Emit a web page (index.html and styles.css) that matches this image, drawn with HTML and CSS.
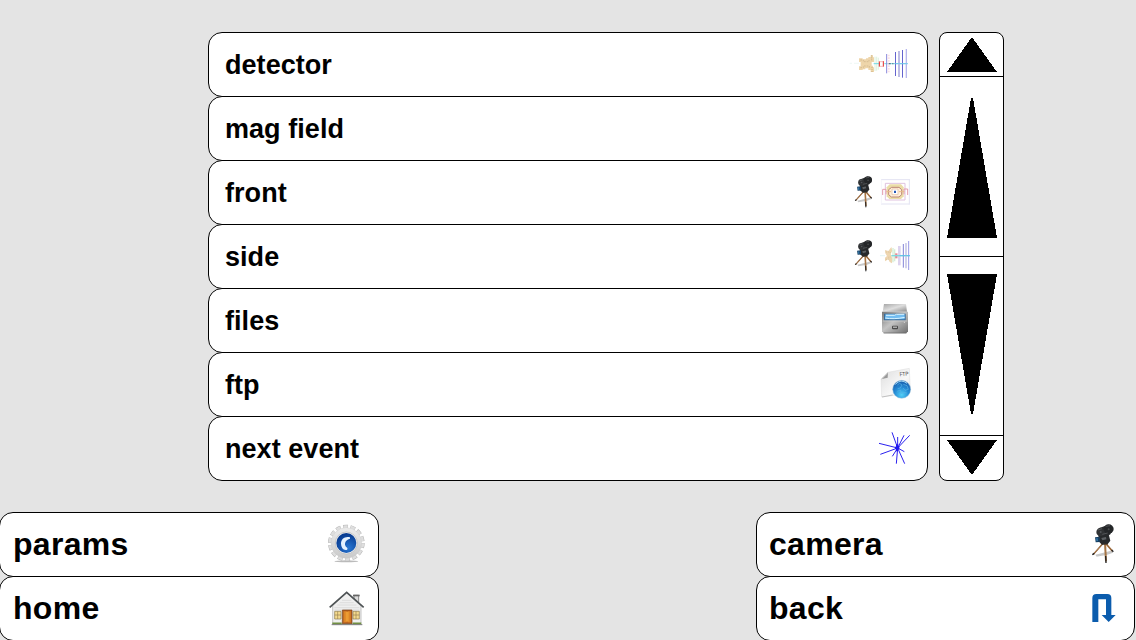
FILE: index.html
```html
<!DOCTYPE html>
<html lang="en">
<head>
<meta charset="utf-8">
<title>Event display menu</title>
<link rel="stylesheet" href="styles.css">
</head>
<body>
<svg class="defs" width="0" height="0" aria-hidden="true">
  <defs>
    <radialGradient id="blue" cx=".5" cy=".8" r=".8"><stop offset="0" stop-color="#53d0f7"/><stop offset=".5" stop-color="#258bd5"/><stop offset="1" stop-color="#1658a8"/></radialGradient>
    <radialGradient id="lens" cx=".6" cy=".75" r=".7"><stop offset="0" stop-color="#2a78d3"/><stop offset="1" stop-color="#073b91"/></radialGradient>
    <linearGradient id="metal" x1="0" y1="0" x2="1" y2="1"><stop offset="0" stop-color="#777"/><stop offset=".45" stop-color="#c4c4c4"/><stop offset="1" stop-color="#6c6c6c"/></linearGradient>
    <linearGradient id="lid" x1="0" y1="0" x2="1" y2="1"><stop offset="0" stop-color="#a5a5a5"/><stop offset=".5" stop-color="#dedede"/><stop offset="1" stop-color="#8c8c8c"/></linearGradient>
    <linearGradient id="gear" x1="0" y1="0" x2="0" y2="1"><stop offset="0" stop-color="#ececec"/><stop offset="1" stop-color="#c9c9c9"/></linearGradient>
    <linearGradient id="paper" x1="0" y1="0" x2="1" y2="1"><stop offset="0" stop-color="#ddd"/><stop offset=".6" stop-color="#f8f8f8"/><stop offset="1" stop-color="#ddd"/></linearGradient>
    <symbol id="movie-camera" viewBox="36 42 66 118">
      <path d="M46 134 76 127 98 121 99 128 80 135 65 137 50 140Z" fill="#c9c9c9"/>
      <path d="M70 99 40 133" stroke="#70421f" stroke-width="4"/>
      <path d="M69 100 41 132" stroke="#d59b5d" stroke-width="2"/>
      <path d="M76 99 97 123" stroke="#9a6434" stroke-width="5"/>
      <path d="M75 98 78 154" stroke="#a77544" stroke-width="6"/>
      <path d="M77 138 78 159M37 134 43 130M95 120 100 125" stroke="#222" stroke-width="4"/>
      <path d="M55 74 85 68 91 92 84 101 66 104 57 95Z" fill="#27292b"/>
      <path d="M64 84 78 81 79 88 67 91Z" fill="#5c6063"/>
      <path d="M45 82 59 80 60 96 47 97Z" fill="#173e60"/>
      <path d="M48 85 53 84 54 93 49 94Z" fill="#3274a5"/>
      <path d="M58 54 85 44 99 58 90 74 62 79Z" fill="#292b2d"/>
      <ellipse cx="62" cy="66" rx="13" ry="13" fill="#303234"/>
      <ellipse cx="86" cy="57" rx="15" ry="14" fill="#242628"/>
      <path d="M54 60 66 56M77 49 90 47M67 73 83 69" stroke="#676a6d" stroke-width="2"/>
      <circle cx="62" cy="66" r="3" fill="#53575a"/><circle cx="86" cy="58" r="3" fill="#4b4e50"/>
      <path d="M67 101H84" stroke="#2f2c29" stroke-width="5"/>
    </symbol>
  </defs>
</svg>

<div class="screen">
  <main class="center">
    <nav class="menu">
      <div class="item"><span class="label">detector</span>
        <svg class="icon row-icon" viewBox="0 9 246 189">
          <path d="M14 100H21M27 100H42" stroke="#e5f4ee" stroke-width="2"/>
          <path d="M42 85H53V88H63V85H70V81H77V76H84V82H87V96H80V107H84V112H87V126H77V120H70V115H61V118H53V120H42V109H47V96H42Z" fill="#eed5aa"/>
          <path d="M46 90H55V95H72V90M46 113H55V108H73V113" fill="none" stroke="#d7bd93" stroke-width="3" stroke-dasharray="5 3"/>
          <path d="M80 76V92M81 111V127" stroke="#c9b284" stroke-width="3" stroke-dasharray="3"/>
          <path d="M90 80V123M95 80V122M100 83V119" stroke="#cdeccf" stroke-width="2"/>
          <path d="M86 101H104M118 101H188" stroke="#73d8e5" stroke-width="3"/>
          <path d="M103 94V110M115 93V110" stroke="#e32626" stroke-width="3"/><path d="M103 95H116M103 109H116" stroke="#ef9898" stroke-width="2"/>
          <path d="M125 72V130" stroke="#8989dc" stroke-width="3"/><path d="M131 74V127" stroke="#fbe0e5" stroke-width="6" stroke-dasharray="5 3"/>
          <path d="M131 101H137M142 101H145" stroke="#596c83" stroke-width="4"/>
          <path d="M151.500 66V138M172.500 60V143" stroke="#6464ce" stroke-width="3"/><path d="M162 63V141" stroke="#bebee6" stroke-width="6"/><path d="M184 57V144" stroke="#b7b7ed" stroke-width="4"/>
          <path d="M151 101H188" stroke="#79c9ed" stroke-width="3"/>
        </svg>
      </div>
      <div class="item"><span class="label">mag field</span></div>
      <div class="item"><span class="label">front</span>
        <svg class="icon row-icon" viewBox="0 -27 246 189">
          <use href="#movie-camera" x="29" y="18" width="53" height="95"/>
          <path d="M108 29H193M108 102H193M193 27V104" stroke="#e3e3f2" stroke-width="3"/><path d="M109 29V101" stroke="#f5f5fb" stroke-width="3"/>
          <path d="M121 40H180V90H121Z" fill="none" stroke="#dfc2df" stroke-width="3"/>
          <path d="M134 43H168L176 52V79L168 87H133L125 79V52Z" fill="#eadca6"/>
          <path d="M140 52H162L170 59V74L162 81H139L131 74V59Z" fill="#fff0d9" stroke="#bc8578" stroke-width="3"/>
          <path d="M141 57H159V74H141Z" fill="#fff" stroke="#e3b798" stroke-width="2"/>
          <path d="M113 58H123V73M113 58V75M188 57H177V73M188 57V75" fill="none" stroke="#e39cac" stroke-width="3"/>
          <path d="M124 65H138M162 65H178" stroke="#e7ba89" stroke-width="3"/>
          <path d="M147 62H153V69H147Z" fill="#2458b8"/>
        </svg>
      </div>
      <div class="item"><span class="label">side</span>
        <svg class="icon row-icon" viewBox="0 -27 246 189">
          <use href="#movie-camera" x="29" y="18" width="53" height="95"/>
          <path d="M105 65H120" stroke="#d4f0ee" stroke-width="2"/>
          <path d="M120 48 130 51 139 39 142 50 137 59 142 74 141 88 134 84 130 76 120 82 120 71 126 66 121 58Z" fill="#eed6b0"/>
          <path d="M122 54H136V60M122 76H131V69H138" fill="none" stroke="#d9bf94" stroke-width="2" stroke-dasharray="4 3"/>
          <path d="M144 42V85M149 46V82" stroke="#d6eed6" stroke-width="4"/>
          <path d="M154 58V73" stroke="#e88995" stroke-width="7"/><path d="M163 36V94" stroke="#ddd3ee" stroke-width="8"/>
          <path d="M139 65H194" stroke="#83d8df" stroke-width="4"/>
          <path d="M175 30V101" stroke="#8282d7" stroke-width="3"/><path d="M183 27V103" stroke="#c9c9e8" stroke-width="5"/><path d="M191 21V108" stroke="#9a9ae5" stroke-width="3"/>
          <path d="M164 65H195" stroke="#60c4e8" stroke-width="3"/>
        </svg>
      </div>
      <div class="item"><span class="label">files</span>
        <svg class="icon file-icon" viewBox="0 -18 171 189">
          <path d="M42 27H108L111 50H38Z" fill="url(#lid)"/>
          <path d="M36 50H114V109L109 115H41L36 109Z" fill="url(#metal)"/>
          <path d="M42 56H107V76H42Z" fill="#386b99"/><path d="M46 58H104V73H45Z" fill="#73bdf1"/>
          <path d="M48 61H74L79 58H103M46 69Q70 74 104 67" fill="none" stroke="#d9f4ff" stroke-width="3"/>
          <path d="M38 78H112" stroke="#d2d2d2" stroke-width="2"/>
          <rect x="66" y="92" width="18" height="11" rx="3" fill="#4a4a4a"/><path d="M69 95H81V98H69Z" fill="#ddd"/>
          <circle cx="103" cy="82" r="1.5" fill="#eee"/><path d="M41 114H109" stroke="#666" stroke-width="2"/>
        </svg>
      </div>
      <div class="item"><span class="label">ftp</span>
        <svg class="icon file-icon" viewBox="0 -21 171 189">
          <path d="M54 37 118 25 121 94 80 105 35 111 33 57Z" fill="url(#paper)" stroke="#ddd" stroke-width="1.5"/>
          <path d="M36 57 54 37 53 53Z" fill="#999"/><path d="M35 57 53 40" stroke="#bbb" stroke-width="3"/>
          <path d="M36 111 68 105" stroke="#aaa" stroke-width="2"/>
          <text class="ftp-mark" x="89" y="49" textLength="27" lengthAdjust="spacingAndGlyphs" transform="rotate(-5 89 49)">FTP</text>
          <circle cx="95" cy="88" r="27" fill="url(#blue)" stroke="#a5c9df" stroke-width="1.5"/>
          <path d="M82 75 89 70 96 75 91 84 83 86M100 73 111 77 115 88 105 91 99 84M82 94 91 90 94 101 101 97 110 99" fill="none" stroke="#57b2e6" stroke-width="2"/>
          <path d="M76 73Q93 55 111 70" fill="none" stroke="#a4d7f3" stroke-width="3"/>
        </svg>
      </div>
      <div class="item"><span class="label">next event</span>
        <svg class="icon file-icon" viewBox="0 -24 171 189">
          <path d="M83 69 66 22M83 69V36M83 69 102 31M83 69 119 31M83 69 27 55M83 69 31 88M83 69 67 94M83 69 79 116M83 69 104 116M83 69 103 80" fill="none" stroke="#2a20ef" stroke-width="3"/>
          <path d="M78 58H85V63H88V73H84V79H78V72H75V65H78Z" fill="#2018ee"/>
        </svg>
      </div>
    </nav>
    <div class="scroll">
      <svg class="arrow step" viewBox="0 0 63 43"><path d="M32 4 57 39H7Z"/></svg>
      <svg class="arrow page" viewBox="0 0 63 179"><path d="M31 21H33L57 161H7Z"/></svg>
      <svg class="arrow page-down" viewBox="0 0 63 178"><path d="M7 17H57L33 157H31Z"/></svg>
      <svg class="arrow step-down" viewBox="0 0 63 44"><path d="M7 4H57L32 39Z"/></svg>
    </div>
  </main>

  <footer class="corners">
    <nav class="menu side-menu">
      <div class="item"><span class="label">params</span>
        <svg class="icon params-icon" viewBox="0 9 174 189">
          <ellipse cx="79" cy="154" rx="36" ry="3" fill="#bbb"/>
          <circle cx="79" cy="99" r="49" fill="none" stroke="#b5b5b5" stroke-width="12" stroke-dasharray="14.500 7.490"/>
          <circle cx="79" cy="99" r="48.500" fill="none" stroke="#dedede" stroke-width="10" stroke-dasharray="12.500 9.265" stroke-dashoffset="-1"/>
          <circle cx="79" cy="99" r="46" fill="url(#gear)" stroke="#c4c4c4" stroke-width="1"/>
          <circle cx="79" cy="99" r="33" fill="#f4f4f4" stroke="#b5b5b5" stroke-width="2"/>
          <circle cx="79" cy="99" r="30" fill="url(#lens)"/>
          <path d="M90 82C75 78 63 87 63 101Q64 119 77 120Q84 120 82 114Q70 105 78 93Q84 87 90 86Z" fill="#e5f2ff"/>
        </svg>
      </div>
      <div class="item"><span class="label">home</span>
        <svg class="icon params-icon" viewBox="0 201 174 189">
          <path d="M102 256H116V282H102Z" fill="#ddd" stroke="#555" stroke-width="2"/><path d="M99 254H119V259H99Z" fill="#666"/>
          <path d="M38 287 80 248 123 288V341H38Z" fill="#efefef" stroke="#aaa" stroke-width="2"/>
          <path d="M43 293H118M43 300H118M52 285H109M59 278H101M66 271H94" stroke="#d3d3d3" stroke-width="2"/>
          <path d="M29 292 80 247 131 292" fill="none" stroke="#4e5355" stroke-width="5"/>
          <path d="M44 304H63V327H44ZM99 304H118V327H99Z" fill="#f4da8e" stroke="#8c784b" stroke-width="2"/>
          <path d="M53 304V327M44 315H63M108 304V327M99 315H118" stroke="#97804f" stroke-width="2"/>
          <path d="M67 300H96V341H67Z" fill="#b96221" stroke="#754116" stroke-width="2"/>
          <path d="M71 304H79V337H71ZM84 304H92V337H84Z" fill="#dc8426"/><path d="M77 305H86V335H77Z" fill="#ec9c33"/>
          <path d="M37 340H65M98 340H124" stroke="#719042" stroke-width="5"/><path d="M35 344H127" stroke="#777" stroke-width="3"/>
        </svg>
      </div>
    </nav>
    <nav class="menu side-menu right-menu">
      <div class="item"><span class="label">camera</span>
        <svg class="icon camera-icon" viewBox="0 9 162 189"><use href="#movie-camera" x="36" y="42" width="66" height="118"/></svg>
      </div>
      <div class="item"><span class="label">back</span>
        <svg class="icon camera-icon" viewBox="0 201 162 189">
          <path d="M37 336V264Q37 252 49 252H82Q94 252 94 264V315H107L86 336 65 315H78V268H55V336Z" fill="#0b5cad"/>
        </svg>
      </div>
    </nav>
  </footer>
</div>
</body>
</html>
```
FILE: styles.css
```css
* { box-sizing: border-box; }
body {
  margin: 0;
  overflow: hidden;
  background: #e4e4e4;
  color: #000;
  font-family: "Liberation Sans", Arial, sans-serif;
  font-weight: bold;
}
.defs { display: block; }
.screen {
  width: 1136px;
  height: 640px;
  padding-top: 32px;
  overflow: hidden;
}
.center {
  display: flex;
  gap: 11px;
  margin-left: 208px;
}
.menu {
  display: flex;
  flex-direction: column;
  width: 720px;
}
.item {
  display: flex;
  align-items: center;
  justify-content: space-between;
  height: 65px;
  padding-left: 16px;
  background: #fff;
  border: 1px solid #000;
  border-radius: 14px;
}
.item + .item { margin-top: -1px; }
.label {
  padding-top: 1px;
  font-size: 27px;
  line-height: 63px;
  letter-spacing: .05px;
  white-space: pre;
}
.icon { display: block; flex: none; height: 63px; }
.row-icon { width: 82px; }
.file-icon { width: 57px; }
.params-icon { width: 58px; }
.camera-icon { width: 54px; }
.ftp-mark { font-size: 17px; font-weight: normal; fill: #444; }
.scroll {
  display: flex;
  flex-direction: column;
  width: 65px;
  height: 449px;
  background: #fff;
  border: 1px solid #000;
  border-radius: 8px;
}
.arrow {
  display: block;
  flex: none;
  box-sizing: content-box;
  width: 63px;
  shape-rendering: crispEdges;
}
.arrow + .arrow { border-top: 1px solid #000; }
.step { height: 43px; }
.page { height: 179px; }
.page-down { height: 178px; }
.step-down { height: 44px; }
.corners {
  display: flex;
  justify-content: space-between;
  width: 1136px;
  margin: 31px 0 0 -1px;
}
.side-menu { width: 380px; }
.right-menu { width: 379px; }
.side-menu .item { padding-left: 13px; }
.right-menu .item { padding-left: 12px; }
.side-menu .label {
  padding-top: 0;
  font-size: 32px;
  letter-spacing: .3px;
}
```
